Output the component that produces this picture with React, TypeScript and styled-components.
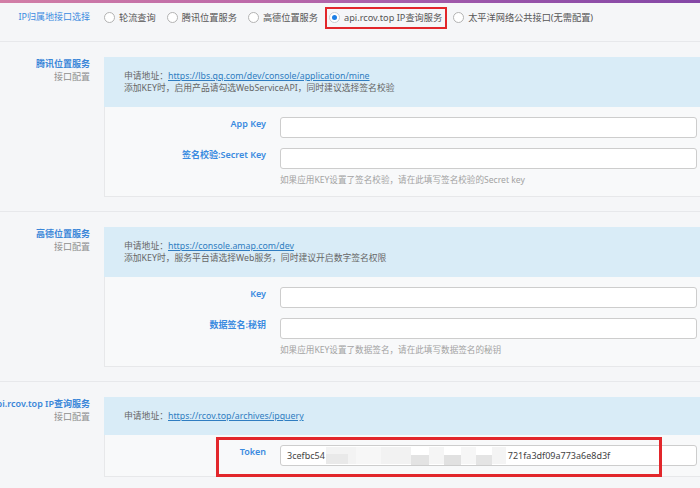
import React from "react";
import styled, { createGlobalStyle, css } from "styled-components";

const GlobalStyle = createGlobalStyle`
  html, body { margin: 0; padding: 0; background: #f5f6f8; overflow: hidden; }
  body { font-family: "Noto Sans", "Noto Sans CJK SC", sans-serif; }
  * { box-sizing: border-box; }
`;

const TopBar = styled.div`
  height: 3px;
  background: linear-gradient(90deg, #d27ea6 0%, #bd6aa9 35%, #9a55aa 70%, #8447a6 100%);
`;

const Page = styled.div`
  width: 709px;
`;

const Row = styled.section<{ $head?: boolean }>`
  display: grid;
  grid-template-columns: 90px 1fr;
  column-gap: 14px;
  border-bottom: 1px solid #e7e8eb;
  ${(p) =>
    p.$head
      ? css`
          height: 39px;
          padding-top: 6px;
        `
      : css`
          padding: 15px 0 14px;
        `}
`;

const RowLabel = styled.div`
  display: flex;
  flex-direction: column;
  align-items: flex-end;
  min-width: 0;
  white-space: nowrap;
`;

const HeadLabel = styled.span`
  color: #3b8be0;
  font-size: 9px;
  line-height: 16px;
`;

const Title = styled.span`
  color: #3a86d8;
  font-size: 9px;
  font-weight: 600;
  line-height: 13px;
`;

const Sub = styled.span`
  color: #8e8e8e;
  font-size: 9px;
  line-height: 14px;
`;

const RadioGroup = styled.div`
  display: flex;
  align-items: center;
  gap: 11px;
  height: 16px;
`;

const RadioItem = styled.label<{ $marked?: boolean }>`
  position: relative;
  display: flex;
  align-items: center;
  gap: 4px;
  height: 16px;
  font-size: 9.2px;
  color: #555;
  white-space: nowrap;
  ${(p) =>
    p.$marked &&
    css`
      &::after {
        content: "";
        position: absolute;
        left: -4px;
        right: -5px;
        top: -2px;
        bottom: -4px;
        border: 2.5px solid #e2262b;
      }
    `}
`;

const Circle = styled.span<{ $checked?: boolean }>`
  width: 11px;
  height: 11px;
  border-radius: 50%;
  border: 1px solid #b3b3b3;
  background: #fff;
  display: grid;
  place-items: center;
  ${(p) =>
    p.$checked &&
    css`
      border-color: #c9cdd2;
      &::before {
        content: "";
        width: 5px;
        height: 5px;
        border-radius: 50%;
        background: #1c7fe6;
      }
    `}
`;

const Panel = styled.div`
  display: flex;
  flex-direction: column;
`;

const Info = styled.div`
  background: #d9ecf7;
  padding: 13px 20px;
  font-size: 8.8px;
  line-height: 12px;
  color: #666;
  white-space: nowrap;
`;

const InfoLink = styled.a`
  color: #2f7dc1;
  text-decoration: underline;
`;

const FormArea = styled.div`
  background: #f8f9fa;
  border: 1px solid #e7e8ea;
  border-top: none;
  padding: 10px 11px 10px;
  display: flex;
  flex-direction: column;
  gap: 10px;
`;

const FormRow = styled.div<{ $marked?: boolean }>`
  position: relative;
  display: grid;
  grid-template-columns: 150px 1fr;
  column-gap: 14px;
  align-items: start;
  ${(p) =>
    p.$marked &&
    css`
      &::after {
        content: "";
        position: absolute;
        left: 100px;
        top: -8px;
        width: 440px;
        height: 34px;
        border: 3px solid #e2262b;
        pointer-events: none;
      }
    `}
`;

const FieldLabel = styled.label`
  text-align: right;
  color: #3b8be0;
  font-size: 9px;
  font-weight: 600;
  line-height: 14px;
  white-space: nowrap;
`;

const FieldCell = styled.div`
  display: flex;
  flex-direction: column;
`;

const TextInput = styled.input`
  width: 100%;
  height: 21px;
  border: 1px solid #cdcdcd;
  border-radius: 3px;
  background: #fff;
  padding: 0 6px;
  font-size: 9px;
  font-family: inherit;
  color: #444;
  outline: none;
`;

const TokenField = styled.div`
  width: 100%;
  height: 21px;
  border: 1px solid #cdcdcd;
  border-radius: 3px;
  background: #fff;
  padding: 0 6px;
  display: flex;
  align-items: center;
  font-size: 9px;
  color: #444;
  white-space: nowrap;
`;

const Help = styled.div`
  margin-top: 6px;
  font-size: 8.6px;
  line-height: 11px;
  color: #a3a3a3;
  white-space: nowrap;
`;

const Mosaic = () => (
  <svg width="180" height="19" viewBox="0 0 180 19" style={{ display: "block", margin: "0 2px 0 1px" }}>
    <rect x="0" y="1" width="30" height="17" fill="#f3f3f3" />
    <rect x="0" y="8" width="22" height="10" fill="#e9e9e9" />
    <rect x="30" y="1" width="25" height="17" fill="#f7f7f7" />
    <rect x="55" y="1" width="30" height="17" fill="#f2f2f2" />
    <rect x="85" y="9" width="18" height="10" fill="#e3e3e3" />
    <rect x="103" y="1" width="15" height="17" fill="#f5f5f5" />
    <rect x="118" y="9" width="17" height="10" fill="#e1e1e1" />
    <rect x="135" y="1" width="15" height="17" fill="#f6f6f6" />
    <rect x="150" y="9" width="16" height="10" fill="#e4e4e4" />
    <rect x="166" y="1" width="14" height="17" fill="#f4f4f4" />
  </svg>
);

const radios = [
  { label: "轮流查询" },
  { label: "腾讯位置服务" },
  { label: "高德位置服务" },
  { label: "api.rcov.top IP查询服务", checked: true },
  { label: "太平洋网络公共接口(无需配置)" },
];

export default function App() {
  return (
    <>
      <GlobalStyle />
      <TopBar />
      <Page>
        <Row $head>
          <RowLabel>
            <HeadLabel>IP归属地接口选择</HeadLabel>
          </RowLabel>
          <RadioGroup>
            {radios.map((r) => (
              <RadioItem key={r.label} $marked={r.checked}>
                <Circle $checked={r.checked} />
                {r.label}
              </RadioItem>
            ))}
          </RadioGroup>
        </Row>

        <Row>
          <RowLabel>
            <Title>腾讯位置服务</Title>
            <Sub>接口配置</Sub>
          </RowLabel>
          <Panel>
            <Info>
              申请地址：<InfoLink>https://lbs.qq.com/dev/console/application/mine</InfoLink>
              <br />
              添加KEY时，启用产品请勾选WebServiceAPI，同时建议选择签名校验
            </Info>
            <FormArea>
              <FormRow>
                <FieldLabel>App Key</FieldLabel>
                <FieldCell>
                  <TextInput />
                </FieldCell>
              </FormRow>
              <FormRow>
                <FieldLabel>签名校验:Secret Key</FieldLabel>
                <FieldCell>
                  <TextInput />
                  <Help>如果应用KEY设置了签名校验，请在此填写签名校验的Secret key</Help>
                </FieldCell>
              </FormRow>
            </FormArea>
          </Panel>
        </Row>

        <Row>
          <RowLabel>
            <Title>高德位置服务</Title>
            <Sub>接口配置</Sub>
          </RowLabel>
          <Panel>
            <Info>
              申请地址：<InfoLink>https://console.amap.com/dev</InfoLink>
              <br />
              添加KEY时，服务平台请选择Web服务，同时建议开启数字签名权限
            </Info>
            <FormArea>
              <FormRow>
                <FieldLabel>Key</FieldLabel>
                <FieldCell>
                  <TextInput />
                </FieldCell>
              </FormRow>
              <FormRow>
                <FieldLabel>数据签名:秘钥</FieldLabel>
                <FieldCell>
                  <TextInput />
                  <Help>如果应用KEY设置了数据签名，请在此填写数据签名的秘钥</Help>
                </FieldCell>
              </FormRow>
            </FormArea>
          </Panel>
        </Row>

        <Row>
          <RowLabel>
            <Title>api.rcov.top IP查询服务</Title>
            <Sub>接口配置</Sub>
          </RowLabel>
          <Panel>
            <Info>
              申请地址：<InfoLink>https://rcov.top/archives/ipquery</InfoLink>
            </Info>
            <FormArea>
              <FormRow $marked>
                <FieldLabel>Token</FieldLabel>
                <FieldCell>
                  <TokenField>
                    3cefbc54
                    <Mosaic />
                    721fa3df09a773a6e8d3f
                  </TokenField>
                </FieldCell>
              </FormRow>
            </FormArea>
          </Panel>
        </Row>
      </Page>
    </>
  );
}
